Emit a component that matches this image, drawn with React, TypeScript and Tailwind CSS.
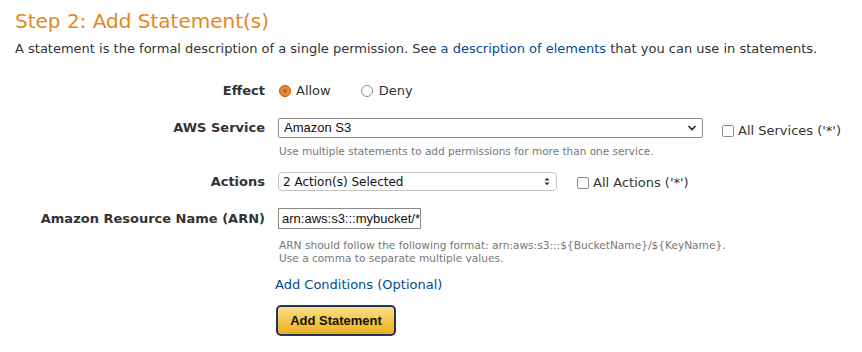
import React from "react";

const verdana = { fontFamily: '"DejaVu Sans", Verdana, sans-serif' };

function Checkbox() {
  return <span className="inline-block w-[12px] h-[12px] border border-[#8f8f8f] rounded-[2px] bg-white shrink-0" />;
}

export default function App() {
  return (
    <div className="w-[862px] h-[352px] bg-white text-[#333] pl-[15px] overflow-hidden" style={verdana}>
      <h2 className="text-[20px] leading-[24px] mt-[9px] text-[#e5861f] font-normal">Step 2: Add Statement(s)</h2>
      <p className="text-[13px] leading-[16px] mt-[8px]">
        A statement is the formal description of a single permission. See{" "}
        <a className="text-[#004b91]">a description of elements</a> that you can use in statements.
      </p>

      <div className="grid grid-cols-[250px_1fr] gap-x-[13px] mt-[24px] items-center">
        {/* Effect */}
        <div className="text-right font-bold text-[13px] leading-[20px]">Effect</div>
        <div className="flex items-center h-[20px] text-[13px]">
          <span className="w-[12px] h-[12px] rounded-full bg-[#e8893a] border border-[#b5570f] ml-[1px] flex items-center justify-center">
            <span className="w-[4px] h-[4px] rounded-full bg-[#c86a1c]" />
          </span>
          <span className="ml-[5px]">Allow</span>
          <span className="w-[12px] h-[12px] rounded-full bg-white border border-[#8f8f8f] ml-[30px]" />
          <span className="ml-[6px]">Deny</span>
        </div>

        {/* AWS Service */}
        <div className="text-right font-bold text-[13px] leading-[20px] mt-[17px] self-start">AWS Service</div>
        <div className="mt-[17px]">
          <div className="flex items-center h-[20px]">
            <div
              className="w-[425px] h-[20px] border border-[#8a8a8a] rounded-[2px] bg-white flex items-center justify-between pl-[5px] pr-[5px] text-[13px] text-[#111]"
              style={{ fontFamily: '"Liberation Sans", Arial, sans-serif' }}
            >
              <span>Amazon S3</span>
              <svg width="10" height="8" viewBox="0 0 10 8">
                <path d="M1.5 2 L5 5.5 L8.5 2" fill="none" stroke="#222" strokeWidth="1.6" />
              </svg>
            </div>
            <div className="flex items-center ml-[19px] text-[13px] translate-y-[3px]">
              <Checkbox />
              <span className="ml-[4px]">All Services ('*')</span>
            </div>
          </div>
          <div className="text-[10.5px] leading-[14px] text-[#777] mt-[6px] pl-[1px]">
            Use multiple statements to add permissions for more than one service.
          </div>
        </div>

        {/* Actions */}
        <div className="text-right font-bold text-[13px] leading-[19px] mt-[14px]">Actions</div>
        <div className="flex items-center mt-[14px] h-[19px]">
          <div className="w-[279px] h-[19px] border border-[#c4c4c4] rounded-[4px] bg-white flex items-center justify-between pl-[4px] pr-[6px] text-[12px] text-[#111]">
            <span>2 Action(s) Selected</span>
            <svg width="6" height="9" viewBox="0 0 6 9">
              <path d="M0.5 3.5 L3 0.8 L5.5 3.5 Z" fill="#333" />
              <path d="M0.5 5.5 L3 8.2 L5.5 5.5 Z" fill="#333" />
            </svg>
          </div>
          <div className="flex items-center ml-[20px] text-[13px] translate-y-[1px]">
            <Checkbox />
            <span className="ml-[4px]">All Actions ('*')</span>
          </div>
        </div>

        {/* ARN */}
        <div className="text-right font-bold text-[13px] leading-[21px] mt-[17px] self-start">Amazon Resource Name (ARN)</div>
        <div className="mt-[17px]">
          <div
            className="w-[143px] h-[21px] border border-[#8a8a8a] bg-white flex items-center pl-[3px] text-[13px] text-[#111] overflow-hidden whitespace-nowrap"
            style={{ fontFamily: '"Liberation Sans", Arial, sans-serif' }}
          >
            arn:aws:s3:::mybucket/*
          </div>
          <div className="text-[10.6px] leading-[13px] text-[#777] mt-[10px] pl-[1px]">
            <div>ARN should follow the following format: arn:aws:s3:::${"{"}BucketName{"}"}/${"{"}KeyName{"}"}.</div>
            <div>Use a comma to separate multiple values.</div>
          </div>
        </div>

        <div />
        <div className="ml-[-3px]">
          <a className="block text-[13px] leading-[16px] text-[#004b91] mt-[12px]">Add Conditions (Optional)</a>
          <button
            className="mt-[12px] ml-[1px] w-[120px] h-[31px] rounded-[5px] border-2 border-[#263657] bg-gradient-to-b from-[#f9e08a] via-[#f3c84a] to-[#ecae1c] text-[13px] font-bold text-[#111]"
            style={{ fontFamily: '"Liberation Sans", Arial, sans-serif' }}
          >
            Add Statement
          </button>
        </div>
      </div>
    </div>
  );
}
